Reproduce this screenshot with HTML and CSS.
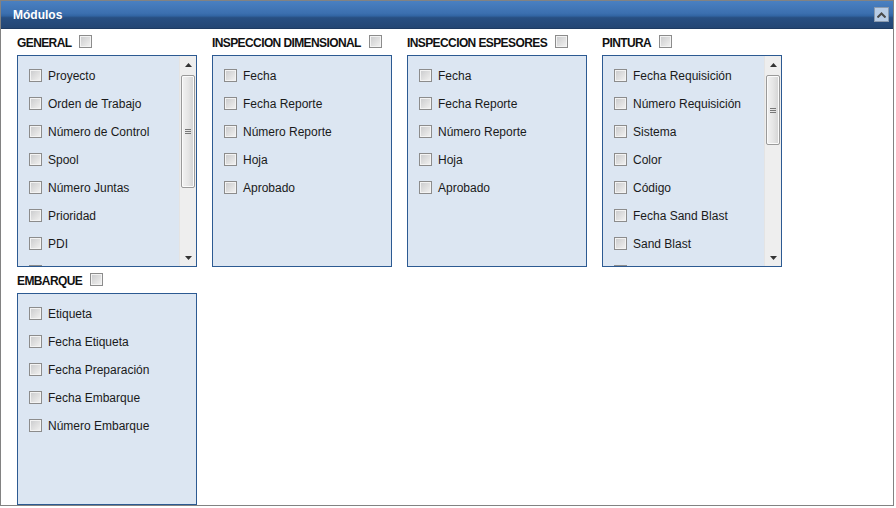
FILE: index.html
```html
<!DOCTYPE html>
<html lang="es">
<head>
<meta charset="utf-8">
<title>Módulos</title>
<link rel="stylesheet" href="styles.css">
</head>
<body>
<div class="panel">
  <div class="panel-header">
    <span class="title">Módulos</span>
    <button class="collapse" type="button" aria-label="Contraer">
      <svg width="9" height="6" viewBox="0 0 9 6"><path d="M0.5 5.5 L4.5 1.5 L8.5 5.5" fill="none" stroke="#4a4a4a" stroke-width="2"/></svg>
    </button>
  </div>
  <div class="panel-body">
    <section class="group">
      <div class="group-head"><span class="group-title">GENERAL</span><input class="chk" type="checkbox"></div>
      <div class="box">
        <ul class="items">
          <li><input class="chk" type="checkbox"><span>Proyecto</span></li>
          <li><input class="chk" type="checkbox"><span>Orden de Trabajo</span></li>
          <li><input class="chk" type="checkbox"><span>Número de Control</span></li>
          <li><input class="chk" type="checkbox"><span>Spool</span></li>
          <li><input class="chk" type="checkbox"><span>Número Juntas</span></li>
          <li><input class="chk" type="checkbox"><span>Prioridad</span></li>
          <li><input class="chk" type="checkbox"><span>PDI</span></li>
          <li><input class="chk" type="checkbox"></li>
        </ul>
        <div class="sbar">
          <div class="sbtn"><svg width="7" height="4" viewBox="0 0 7 4"><path d="M3.5 0 L7 4 L0 4 Z" fill="#333"/></svg></div>
          <div class="strack"><div class="thumb"><span class="grip"></span></div></div>
          <div class="sbtn"><svg width="7" height="4" viewBox="0 0 7 4"><path d="M0 0 L7 0 L3.5 4 Z" fill="#333"/></svg></div>
        </div>
      </div>
    </section>
    <section class="group">
      <div class="group-head"><span class="group-title">INSPECCION DIMENSIONAL</span><input class="chk" type="checkbox"></div>
      <div class="box">
        <ul class="items">
          <li><input class="chk" type="checkbox"><span>Fecha</span></li>
          <li><input class="chk" type="checkbox"><span>Fecha Reporte</span></li>
          <li><input class="chk" type="checkbox"><span>Número Reporte</span></li>
          <li><input class="chk" type="checkbox"><span>Hoja</span></li>
          <li><input class="chk" type="checkbox"><span>Aprobado</span></li>
        </ul>
      </div>
    </section>
    <section class="group">
      <div class="group-head"><span class="group-title">INSPECCION ESPESORES</span><input class="chk" type="checkbox"></div>
      <div class="box">
        <ul class="items">
          <li><input class="chk" type="checkbox"><span>Fecha</span></li>
          <li><input class="chk" type="checkbox"><span>Fecha Reporte</span></li>
          <li><input class="chk" type="checkbox"><span>Número Reporte</span></li>
          <li><input class="chk" type="checkbox"><span>Hoja</span></li>
          <li><input class="chk" type="checkbox"><span>Aprobado</span></li>
        </ul>
      </div>
    </section>
    <section class="group">
      <div class="group-head"><span class="group-title">PINTURA</span><input class="chk" type="checkbox"></div>
      <div class="box">
        <ul class="items">
          <li><input class="chk" type="checkbox"><span>Fecha Requisición</span></li>
          <li><input class="chk" type="checkbox"><span>Número Requisición</span></li>
          <li><input class="chk" type="checkbox"><span>Sistema</span></li>
          <li><input class="chk" type="checkbox"><span>Color</span></li>
          <li><input class="chk" type="checkbox"><span>Código</span></li>
          <li><input class="chk" type="checkbox"><span>Fecha Sand Blast</span></li>
          <li><input class="chk" type="checkbox"><span>Sand Blast</span></li>
          <li><input class="chk" type="checkbox"></li>
        </ul>
        <div class="sbar">
          <div class="sbtn"><svg width="7" height="4" viewBox="0 0 7 4"><path d="M3.5 0 L7 4 L0 4 Z" fill="#333"/></svg></div>
          <div class="strack"><div class="thumb short"><span class="grip"></span></div></div>
          <div class="sbtn"><svg width="7" height="4" viewBox="0 0 7 4"><path d="M0 0 L7 0 L3.5 4 Z" fill="#333"/></svg></div>
        </div>
      </div>
    </section>
    <section class="group">
      <div class="group-head"><span class="group-title">EMBARQUE</span><input class="chk" type="checkbox"></div>
      <div class="box">
        <ul class="items">
          <li><input class="chk" type="checkbox"><span>Etiqueta</span></li>
          <li><input class="chk" type="checkbox"><span>Fecha Etiqueta</span></li>
          <li><input class="chk" type="checkbox"><span>Fecha Preparación</span></li>
          <li><input class="chk" type="checkbox"><span>Fecha Embarque</span></li>
          <li><input class="chk" type="checkbox"><span>Número Embarque</span></li>
        </ul>
      </div>
    </section>
  </div>
</div>
</body>
</html>
```
FILE: styles.css
```css
* { box-sizing: border-box; }
html, body { margin: 0; padding: 0; background: #fff; }
body { font-family: "Liberation Sans", Arial, sans-serif; font-size: 12px; color: #1a1a1a; }

.panel {
  width: 894px;
  height: 506px;
  border: 1px solid #828282;
  display: flex;
  flex-direction: column;
  overflow: hidden;
}

.panel-header {
  height: 28px;
  flex: 0 0 28px;
  display: flex;
  align-items: center;
  justify-content: space-between;
  padding: 0 4px 0 12px;
  background: linear-gradient(#4a80c1 0%, #3c70b0 45%, #3265a3 55%, #284f82 62%, #244673 100%);
  border-bottom: 1px solid #1e3b62;
}
.title { color: #fff; font-weight: bold; font-size: 12px; }
.collapse {
  width: 15px; height: 15px;
  padding: 0; margin: 0;
  border: 1px solid #8a9aae;
  background: #b9cde6;
  display: flex; align-items: center; justify-content: center;
}

.panel-body {
  display: grid;
  grid-template-columns: repeat(4, 180px);
  column-gap: 15px;
  row-gap: 4px;
  padding: 4px 0 0 16px;
  align-content: start;
}

.group-head {
  height: 22px;
  display: flex;
  align-items: flex-start;
}
.group-head .chk { margin-top: 2px; }
.group-title {
  font-weight: bold;
  font-size: 12px;
  line-height: 14px;
  letter-spacing: -0.6px;
  color: #111;
  margin-top: 3px;
  margin-right: 8px;
}

.box {
  height: 212px;
  border: 1px solid #2c5a92;
  background: #dce6f2;
  display: flex;
  overflow: hidden;
}
.items {
  list-style: none;
  margin: 0;
  padding: 5px 0 0 11px;
  flex: 1;
  overflow: hidden;
}
.items li {
  height: 28px;
  display: flex;
  align-items: center;
  gap: 6px;
}
.items li span { margin-top: 2px; }

.chk {
  -webkit-appearance: none;
  appearance: none;
  width: 13px; height: 13px;
  margin: 0;
  flex: 0 0 13px;
  border: 1px solid #8c8c8c;
  background: linear-gradient(135deg, #c9cacc 0%, #e2e2e2 60%, #f4f4f4 100%);
  box-shadow: inset 0 0 0 1px #f3f3f3;
}

.sbar {
  width: 17px;
  flex: 0 0 17px;
  background: #eeeeee;
  border-left: 1px solid #e4e4e4;
  display: flex;
  flex-direction: column;
}
.sbtn {
  height: 17px;
  display: flex; align-items: center; justify-content: center;
}
.strack { flex: 1; padding: 2px 1px 0; }
.thumb {
  height: 113px;
  border: 1px solid #9a9a9a;
  border-radius: 2px;
  background: linear-gradient(90deg, #f2f2f2 0%, #e6e6e6 50%, #d4d4d4 100%);
  box-shadow: inset 0 0 0 1px #fbfbfb;
  display: flex; align-items: center; justify-content: center;
}
.thumb.short { height: 70px; }
.grip {
  width: 6px; height: 5px;
  border-top: 1px solid #777;
  border-bottom: 1px solid #777;
  position: relative;
}
.grip::after {
  content: "";
  position: absolute; left: 0; right: 0; top: 1px;
  border-top: 1px solid #777;
}
```
